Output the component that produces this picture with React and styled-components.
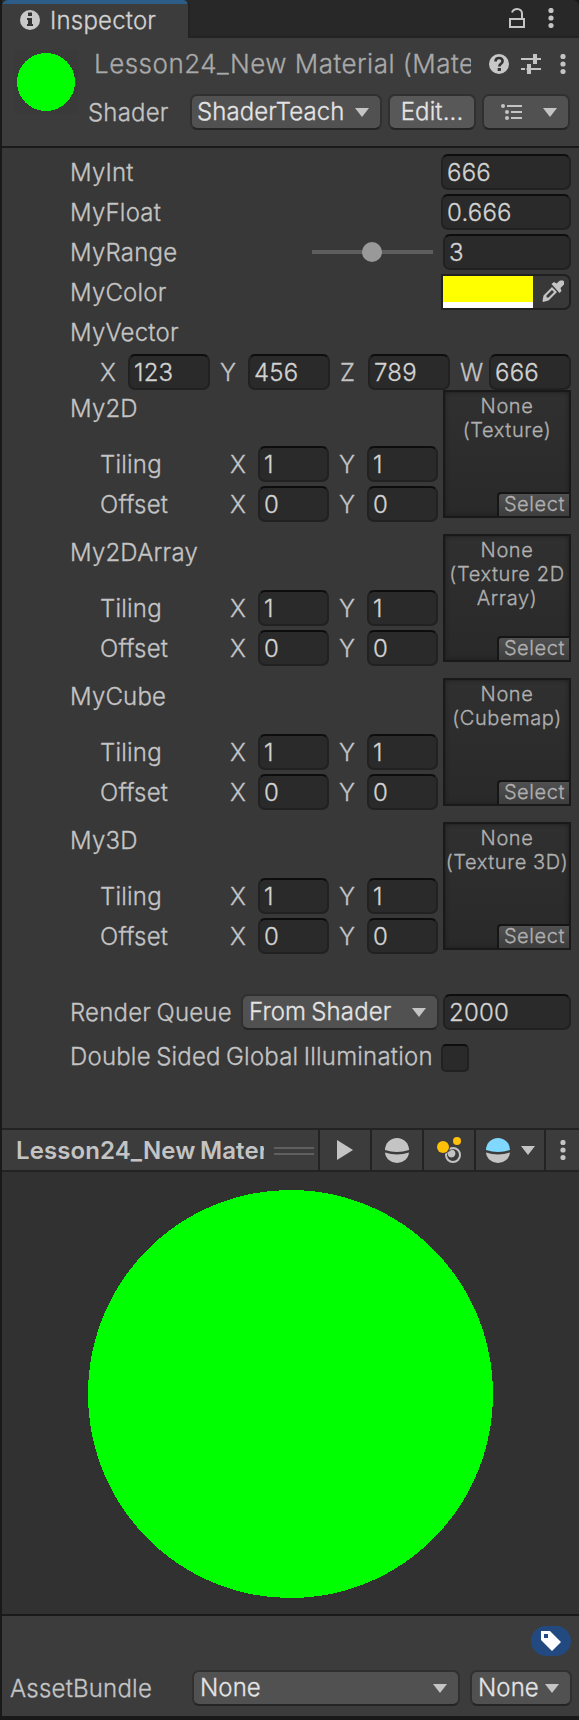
import React from "react";
import styled, { createGlobalStyle } from "styled-components";

const GlobalStyle = createGlobalStyle`
  * { box-sizing: border-box; }
  body { margin: 0; background: #191919; }
  svg { display: block; flex: none; }
`;

const Window = styled.div`
  width: 579px;
  height: 1720px;
  padding: 0 0 4px 2px;
  background: #191919;
  color: #c4c4c4;
  font: 300 24px/36px Inter, sans-serif;
  -webkit-text-stroke: 0.3px currentColor;
  letter-spacing: 0.2px;
  word-spacing: -1.6px;
  white-space: nowrap;
  overflow: hidden;
`;

const TabBar = styled.div`
  display: flex;
  justify-content: space-between;
  height: 38px;
  background: #282828;
  border-bottom: 2px solid #232323;
  border-top-right-radius: 6px;
`;

const Tab = styled.div`
  display: flex;
  gap: 10px;
  width: 188px;
  height: 38px;
  padding-left: 18px;
  background: linear-gradient(#2c5d87 4px, #3c3c3c 4px);
  border-radius: 6px 6px 0 0;
  border-right: 2px solid #232323;
  color: #d2d2d2;
  svg { margin-top: 10px; }
`;

const TabText = styled.span`
  line-height: 41px;
`;

const TabTools = styled.div`
  display: flex;
  gap: 23px;
  padding: 8px 25px 0 0;
`;

const Header = styled.header`
  display: flex;
  height: 110px;
  padding-left: 12px;
  background: #3c3c3c;
  border-bottom: 2px solid #1a1a1a;
`;

const Thumb = styled.div`
  width: 64px;
  height: 64px;
  margin-top: 12px;
  padding: 3px;
  background: #3a3a3a;
`;

const HeaderMain = styled.div`
  flex: 1;
  padding: 7px 9px 0 10px;
`;

const TitleRow = styled.div`
  display: flex;
  height: 49px;
  padding-left: 6px;
`;

const Title = styled.div`
  width: 377px;
  overflow: hidden;
  font-size: 26px;
  line-height: 38px;
  color: #a9a9a9;
  letter-spacing: 0.48px;
  word-spacing: 0;
`;

const TitleIcons = styled.div`
  display: flex;
  gap: 12px;
  padding: 9px 0 0 18px;
  svg:last-child { margin-left: 7px; }
`;

const ShaderRow = styled.div`
  display: flex;
  align-items: flex-start;
`;

const ShaderLabel = styled.span`
  flex: none;
  width: 102px;
  line-height: 37px;
`;

const Button = styled.div`
  display: flex;
  flex: none;
  align-items: center;
  justify-content: ${(p) => (p.$center ? "center" : "space-between")};
  width: ${(p) => p.$w}px;
  height: 36px;
  margin-left: ${(p) => p.$ml || 0}px;
  padding: 0 ${(p) => (p.$pr === undefined ? 11 : p.$pr)}px 0 ${(p) => (p.$pl === undefined ? 6 : p.$pl)}px;
  background: ${(p) => (p.$center ? "#585858" : "#515151")};
  border: 2px solid #303030;
  border-bottom-color: #242424;
  border-radius: 7px;
  color: #e4e4e4;
  line-height: 30px;
  letter-spacing: 0.1px;
`;

const Body = styled.main`
  height: 980px;
  padding-top: 4px;
  background: #383838;
`;

const Row = styled.div`
  display: flex;
  align-items: center;
  justify-content: space-between;
  height: 40px;
  padding: 0 8px 0 68px;
`;

const Label = styled.span`
  padding-top: 2px;
`;

const Field = styled.div`
  width: ${(p) => p.$w}px;
  height: 36px;
  margin-left: ${(p) => p.$ml || 0}px;
  padding-left: 4px;
  background: #2a2a2a;
  border: 2px solid #212121;
  border-top-color: #0d0d0d;
  border-radius: 7px;
  color: #d2d2d2;
  line-height: 34px;
`;

const SliderGroup = styled.div`
  display: flex;
  align-items: center;
  gap: 10px;
`;

const Track = styled.div`
  display: flex;
  align-items: center;
  width: 121px;
  height: 4px;
  padding-left: 50px;
  background: #5e5e5e;
`;

const Knob = styled.div`
  width: 20px;
  height: 20px;
  border-radius: 50%;
  background: #999;
`;

const ColorField = styled.div`
  display: flex;
  justify-content: space-between;
  width: 130px;
  height: 36px;
  padding-right: 5px;
  border: 2px solid #202020;
  border-radius: 0 7px 7px 0;
  svg { margin-top: 4px; }
`;

const Swatch = styled.div`
  width: 90px;
  background: #ffff00;
  border-bottom: 6px solid #fff;
`;

const VectorRow = styled.div`
  display: grid;
  grid-template-columns: 28px 82px 38px 82px 38px 82px 39px 82px;
  height: 38px;
  padding: 2px 0 0 98px;
  line-height: 38px;
`;

const Axis = styled.span`
  padding-left: ${(p) => (p.$first ? 0 : 10)}px;
`;

const TextureRow = styled.section`
  display: flex;
  justify-content: space-between;
  height: 144px;
  padding: 0 8px 0 68px;
`;

const TextureInfo = styled.div`
  width: 368px;
  line-height: 38px;
`;

const TextureName = styled.div`
  height: 36px;
  margin-bottom: 20px;
`;

const VectorLine = styled.div`
  display: grid;
  grid-template-columns: 130px 28px 71px 38px 71px;
  height: 40px;
  padding-left: 30px;
`;

const Slot = styled.div`
  display: flex;
  flex-direction: column;
  justify-content: space-between;
  width: 128px;
  height: 128px;
  border: 2px solid #191919;
  background: linear-gradient(#303030, #292929);
  box-shadow: inset 0 0 4px #1c1c1c;
  color: #b0b0b0;
  font-size: 20px;
  line-height: 24px;
  letter-spacing: 0.6px;
  word-spacing: 0;
  text-align: center;
`;

const SlotText = styled.div`
  padding-top: 2px;
  white-space: pre-line;
  margin: 0 -4px;
`;

const Select = styled.div`
  align-self: flex-end;
  width: 72px;
  height: 24px;
  padding-left: 1px;
  border: solid #151515;
  border-width: 2px 0 0 2px;
  border-radius: 4px 0 0 0;
  background: linear-gradient(#505050, #3d3d3d);
  line-height: 21px;
`;

const QueueRow = styled.div`
  display: flex;
  margin-top: 28px;
  padding-left: 68px;
`;

const QueueLabel = styled.span`
  width: 171px;
  line-height: 38px;
`;

const CheckRow = styled.div`
  display: flex;
  margin-top: 6px;
  padding-left: 68px;
  line-height: 38px;
`;

const CheckLabel = styled.span`
  width: 371px;
`;

const Checkbox = styled.div`
  width: 28px;
  height: 28px;
  margin-top: 6px;
  background: #2a2a2a;
  border: 2px solid #212121;
  border-top-color: #0d0d0d;
  border-radius: 5px;
`;

const PreviewBar = styled.div`
  display: flex;
  height: 44px;
  border: solid #232323;
  border-width: 2px 0;
  background: #3c3c3c;
`;

const PreviewTitle = styled.div`
  width: 248px;
  margin-left: 14px;
  overflow: hidden;
  font-weight: 600;
  -webkit-text-stroke: 0;
  letter-spacing: 0.1px;
  line-height: 41px;
`;

const Grip = styled.div`
  width: 40px;
  height: 8px;
  margin: 17px 4px 0 10px;
  border: solid #5f5f5f;
  border-width: 2px 0;
`;

const Tool = styled.div`
  display: flex;
  align-items: center;
  justify-content: center;
  gap: 11px;
  width: ${(p) => p.$w}px;
  border-left: 2px solid #232323;
`;

const Preview = styled.div`
  display: flex;
  align-items: center;
  justify-content: center;
  height: 442px;
  padding-top: 2px;
  background: #313131;
`;

const Footer = styled.footer`
  height: 102px;
  padding: 10px 7px 0 8px;
  border-top: 2px solid #1a1a1a;
  background: #3c3c3c;
`;

const Tag = styled.div`
  display: flex;
  align-items: center;
  justify-content: center;
  width: 40px;
  height: 30px;
  margin: 0 1px 14px auto;
  border-radius: 15px;
  background: #234a80;
`;

const BundleRow = styled.div`
  display: flex;
`;

const BundleLabel = styled.span`
  flex: none;
  width: 182px;
  line-height: 37px;
`;

const Arrow = () => (
  <svg width="14" height="9" viewBox="0 0 14 9"><path d="M0 0h14L7 9z" fill="#c4c4c4" /></svg>
);

const Dots = () => (
  <svg width="6" height="20" viewBox="0 0 6 20" fill="#c4c4c4">
    <circle cx="3" cy="2.5" r="2.6" /><circle cx="3" cy="10" r="2.6" /><circle cx="3" cy="17.5" r="2.6" />
  </svg>
);

const Info = () => (
  <svg width="20" height="20" viewBox="0 0 20 20">
    <circle cx="10" cy="10" r="10" fill="#c8c8c8" />
    <path d="M8 2.5h4v3.5H8zM7 8h5v6h1v2H7v-2h1v-4H7z" fill="#333" />
  </svg>
);

const Lock = () => (
  <svg width="16" height="20" viewBox="0 0 16 20" fill="none" stroke="#c4c4c4" strokeWidth="2">
    <path d="M1 11h14v8H1zM3 4.5C4 2 6 1 8.200 1 11 1 13 3 13 5.500V11" />
  </svg>
);

const Help = () => (
  <svg width="20" height="20" viewBox="0 0 20 20">
    <circle cx="10" cy="10" r="10" fill="#c8c8c8" />
    <path d="M6.500 7.500C6.500 5 8 4 10 4s3.600 1.200 3.600 3.200c0 2.600-3.300 2.700-3.300 5.300" fill="none" stroke="#333" strokeWidth="2.600" />
    <path d="M8.700 14h3.200v3H8.700z" fill="#333" />
  </svg>
);

const Sliders = () => (
  <svg width="20" height="20" viewBox="0 0 20 20" fill="#c4c4c4">
    <path d="M0 4h12V0h4v4h4v2h-4v4h-4V6H0zM0 14h6v-4h4v4h10v2H10v4H6v-4H0z" />
    <path d="M4 13h1.500v4H4z" fill="#3c3c3c" />
  </svg>
);

const List = () => (
  <svg width="22" height="16" viewBox="0 0 22 16" fill="#c4c4c4">
    <circle cx="2" cy="2" r="2" /><circle cx="6" cy="8" r="2" /><circle cx="6" cy="14" r="2" />
    <path d="M6 1h15v2H6zM10 7h11v2H10zM10 13h11v2H10z" />
  </svg>
);

const Dropper = () => (
  <svg width="22" height="22" viewBox="0 0 22 22" fill="#c4c4c4">
    <path fillRule="evenodd" d="M10 7l5 5-8.500 8.500L1 22l-.5-1 1-5.500zM10 10l-5.500 5.500v2h2L12 12z" />
    <path d="M9.500 4L12 2l2.500 1.500L18 .5h3l1 1v3L18.500 8l1 3-2 2z" />
  </svg>
);

const Ball = ({ top = "#c4c4c4" }) => (
  <svg width="24" height="25" viewBox="0 0 24 25">
    <path d="M0 12a12 12 0 0 1 24 0Q18 14 12 14T0 12z" fill={top} />
    <path d="M0 14.500q6 2 12 2t12-2A12 11.500 0 0 1 12 25 12 11.500 0 0 1 0 14.500z" fill="#c4c4c4" />
  </svg>
);

const Lights = () => (
  <svg width="24" height="26" viewBox="0 0 24 26">
    <circle cx="16" cy="18" r="7" fill="none" stroke="#c4c4c4" strokeWidth="2" />
    <path d="M10.500 15.500L15 12.500a4 4 0 1 1-4 6z" fill="#c4c4c4" />
    <circle cx="6" cy="10" r="7" fill="#3c3c3c" /><circle cx="6" cy="10" r="6" fill="#ffc107" />
    <circle cx="20" cy="4" r="5" fill="#3c3c3c" /><circle cx="20" cy="4" r="4" fill="#ffc107" />
  </svg>
);

const Disc = ({ width, height }) => (
  <svg width={width} height={height} shapeRendering="crispEdges">
    <ellipse cx="50%" cy="50%" rx="50%" ry="50%" fill="#00ff00" />
  </svg>
);

const textures = [
  ["My2D", "None\n(Texture)"],
  ["My2DArray", "None\n(Texture 2D\nArray)"],
  ["MyCube", "None\n(Cubemap)"],
  ["My3D", "None\n(Texture 3D)"],
];

const Pair = ({ label, value }) => (
  <VectorLine>
    <span>{label}</span><Axis $first>X</Axis><Field $w={71}>{value}</Field>
    <Axis>Y</Axis><Field $w={71}>{value}</Field>
  </VectorLine>
);

export default function App() {
  return (
    <Window>
      <GlobalStyle />
      <TabBar>
        <Tab><Info /><TabText>Inspector</TabText></Tab>
        <TabTools><Lock /><Dots /></TabTools>
      </TabBar>
      <Header>
        <Thumb><Disc width={58} height={58} /></Thumb>
        <HeaderMain>
          <TitleRow>
            <Title>Lesson24_New Material (Mate</Title>
            <TitleIcons><Help /><Sliders /><Dots /></TitleIcons>
          </TitleRow>
          <ShaderRow>
            <ShaderLabel>Shader</ShaderLabel>
            <Button $w={192} $pl={5}><span>ShaderTeach</span><Arrow /></Button>
            <Button $w={88} $ml={6} $center $pl={0} $pr={0}><span>Edit...</span></Button>
            <Button $w={88} $ml={6} $pl={17}><List /><Arrow /></Button>
          </ShaderRow>
        </HeaderMain>
      </Header>
      <Body>
        <Row><Label>MyInt</Label><Field $w={130}>666</Field></Row>
        <Row><Label>MyFloat</Label><Field $w={130}>0.666</Field></Row>
        <Row>
          <Label>MyRange</Label>
          <SliderGroup><Track><Knob /></Track><Field $w={128}>3</Field></SliderGroup>
        </Row>
        <Row><Label>MyColor</Label><ColorField><Swatch /><Dropper /></ColorField></Row>
        <Row><Label>MyVector</Label></Row>
        <VectorRow>
          <Axis $first>X</Axis><Field $w={82}>123</Field>
          <Axis>Y</Axis><Field $w={82}>456</Field>
          <Axis>Z</Axis><Field $w={82}>789</Field>
          <Axis>W</Axis><Field $w={82}>666</Field>
        </VectorRow>
        {textures.map(([name, slot]) => (
          <TextureRow key={name}>
            <TextureInfo>
              <TextureName>{name}</TextureName>
              <Pair label="Tiling" value="1" />
              <Pair label="Offset" value="0" />
            </TextureInfo>
            <Slot><SlotText>{slot}</SlotText><Select>Select</Select></Slot>
          </TextureRow>
        ))}
        <QueueRow>
          <QueueLabel>Render Queue</QueueLabel>
          <Button $w={198}><span>From Shader</span><Arrow /></Button>
          <Field $w={128} $ml={4}>2000</Field>
        </QueueRow>
        <CheckRow>
          <CheckLabel>Double Sided Global Illumination</CheckLabel>
          <Checkbox />
        </CheckRow>
      </Body>
      <PreviewBar>
        <PreviewTitle>Lesson24_New Mater</PreviewTitle>
        <Grip />
        <Tool $w={52}><svg width="16" height="20" viewBox="0 0 16 20"><path d="M0 0l16 10L0 20z" fill="#c4c4c4" /></svg></Tool>
        <Tool $w={52}><Ball /></Tool>
        <Tool $w={52}><Lights /></Tool>
        <Tool $w={70}><Ball top="#80d8ff" /><Arrow /></Tool>
        <Tool $w={35}><Dots /></Tool>
      </PreviewBar>
      <Preview><Disc width={405} height={408} /></Preview>
      <Footer>
        <Tag>
          <svg width="20" height="20" viewBox="0 0 20 20"><path fillRule="evenodd" d="M0 0h9l11 11-9 9L0 9zM3 3v4h4V3z" fill="#fff" /></svg>
        </Tag>
        <BundleRow>
          <BundleLabel>AssetBundle</BundleLabel>
          <Button $w={268}><span>None</span><Arrow /></Button>
          <Button $w={102} $ml={10}><span>None</span><Arrow /></Button>
        </BundleRow>
      </Footer>
    </Window>
  );
}
